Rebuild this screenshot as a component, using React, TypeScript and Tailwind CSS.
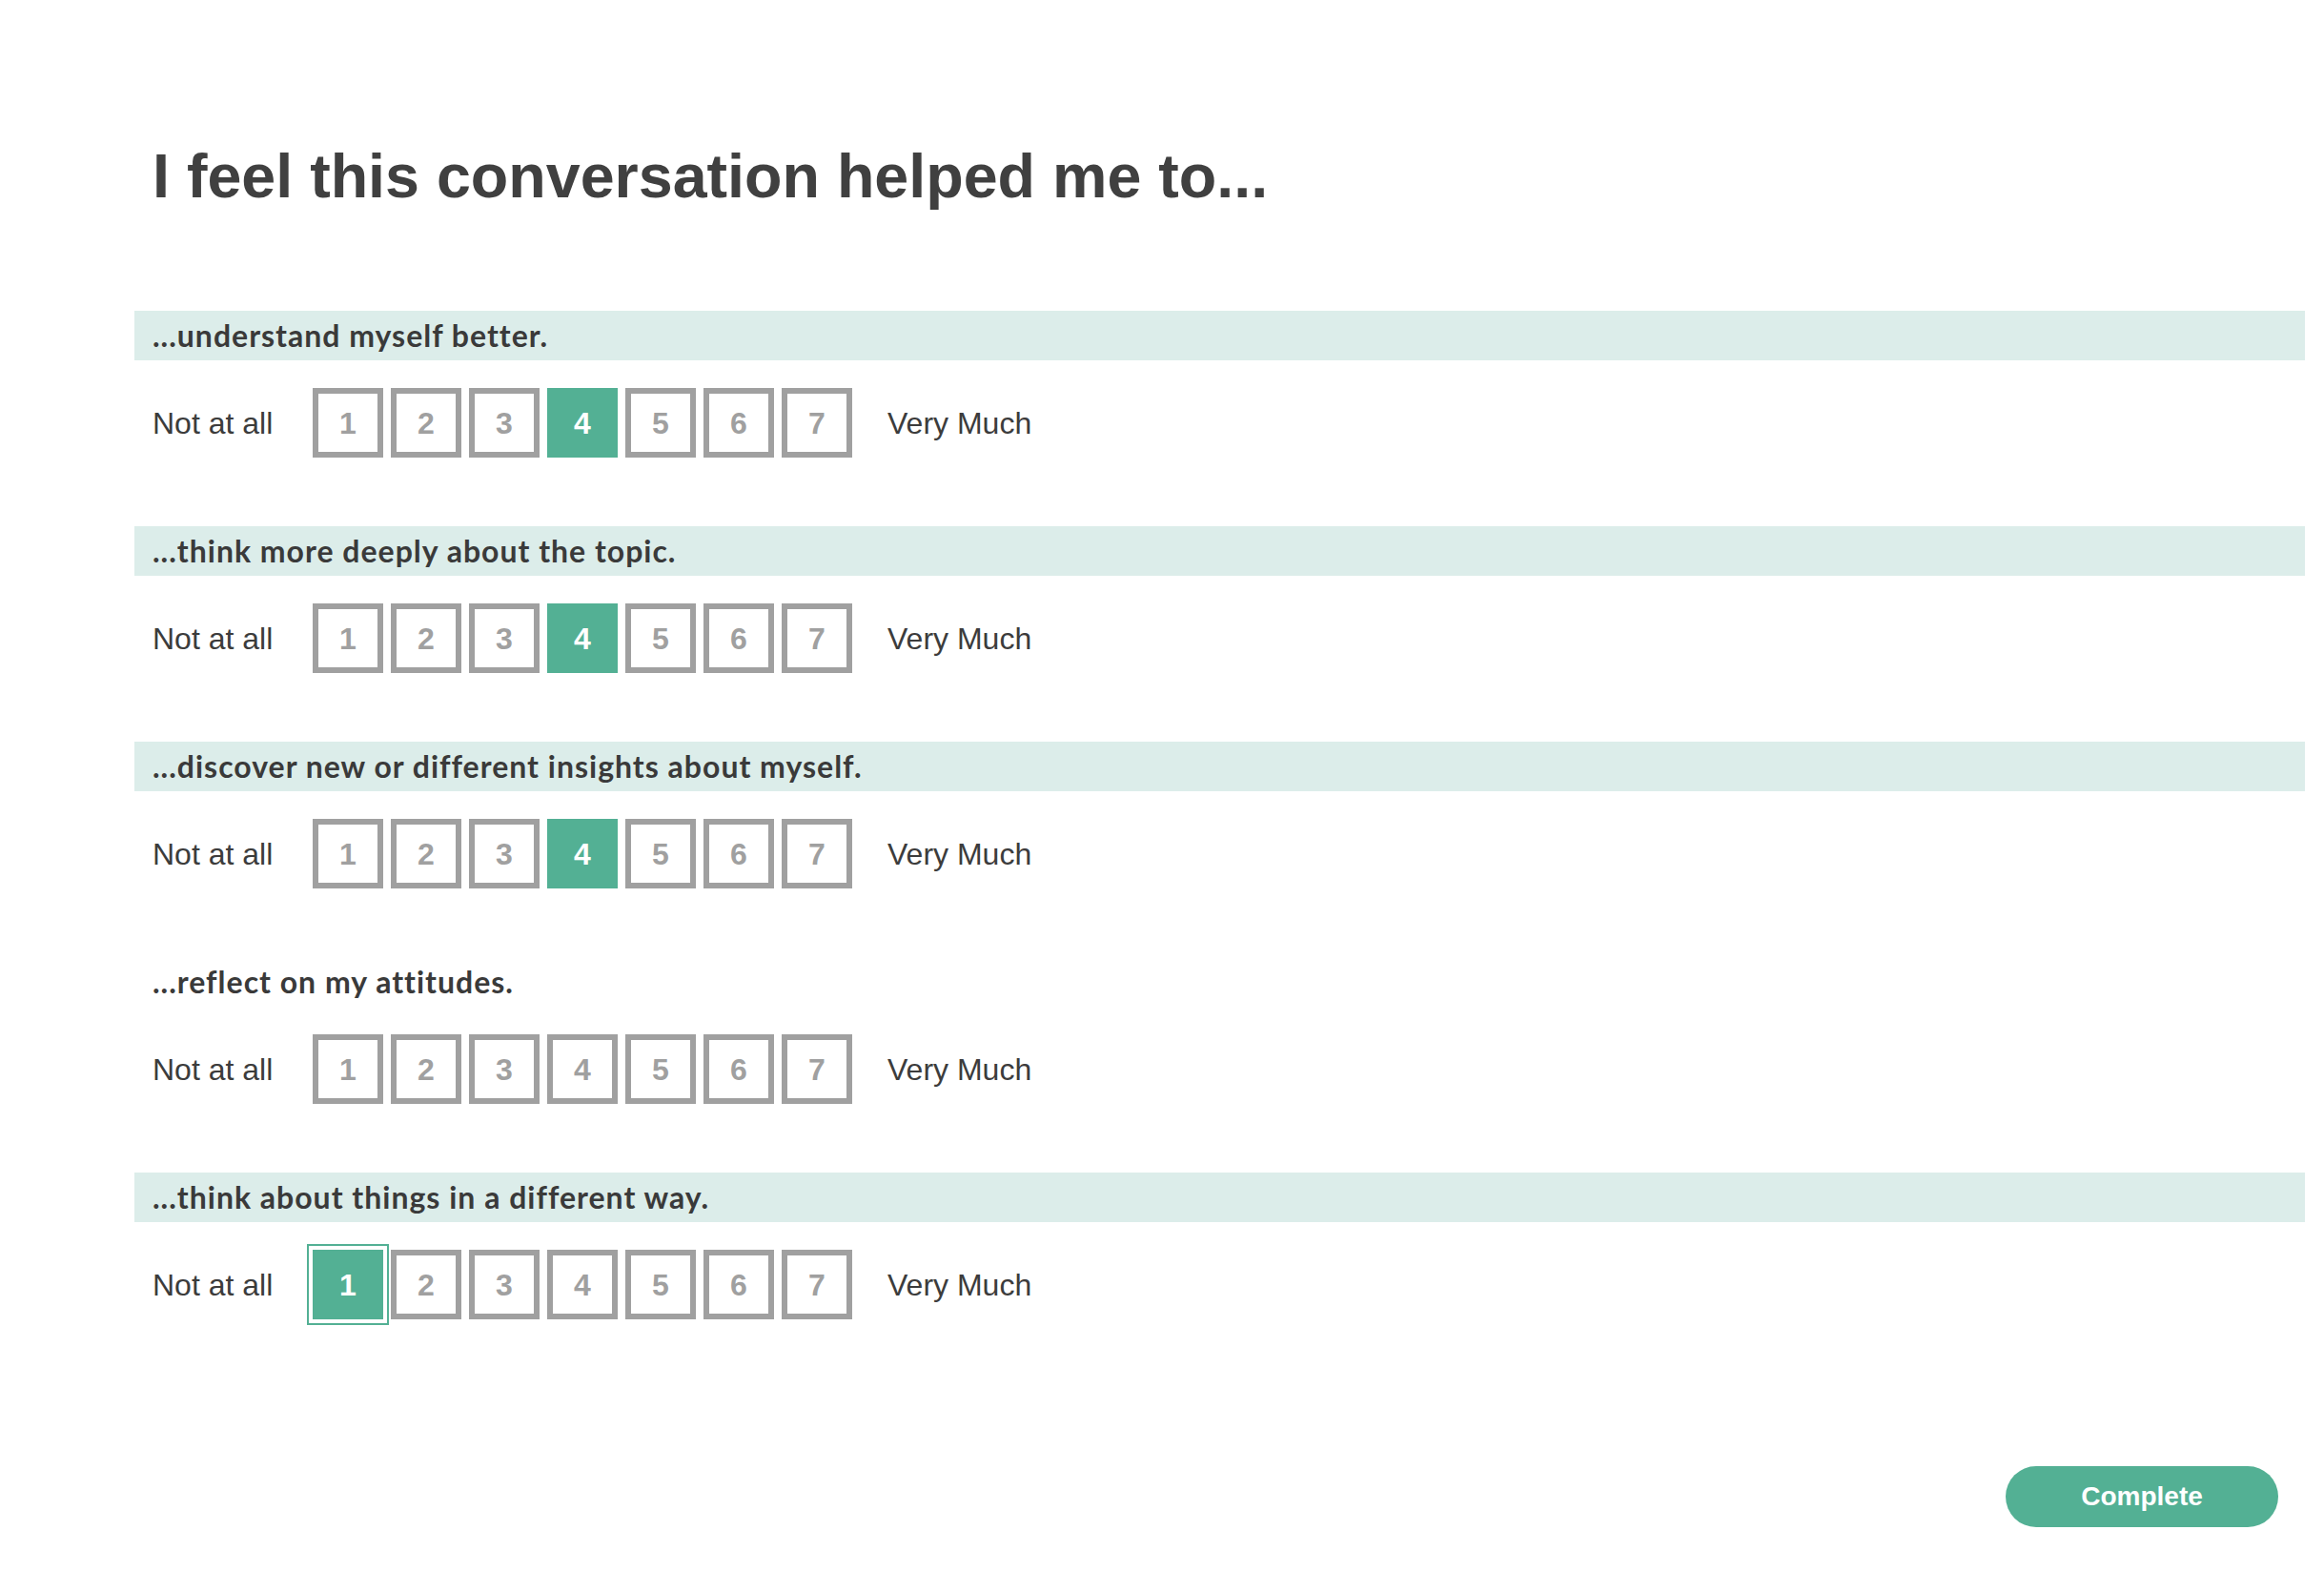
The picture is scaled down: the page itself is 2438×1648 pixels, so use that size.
import { useState } from 'react'

const questions = [
  { text: '...understand myself better.', tinted: true },
  { text: '...think more deeply about the topic.', tinted: true },
  { text: '...discover new or different insights about myself.', tinted: true },
  { text: '...reflect on my attitudes.', tinted: false },
  { text: '...think about things in a different way.', tinted: true },
]

const sans = { fontFamily: '"Liberation Sans", Arial, sans-serif' }
const headFont = { fontFamily: 'Lato, "Open Sans", sans-serif' }

function Scale(props: { value: number | null; focused?: boolean; onPick: (n: number) => void }) {
  return (
    <div className="flex h-[73px] items-center" style={sans}>
      <div className="w-[168px] text-[32px] text-[#3c3c3c]">Not at all</div>
      <div className="flex gap-[8px]">
        {[1, 2, 3, 4, 5, 6, 7].map((n) => {
          const on = props.value === n
          return (
            <button
              key={n}
              onClick={() => props.onPick(n)}
              className={
                on
                  ? 'flex h-[73px] w-[74px] items-center justify-center border-[6px] border-[#53b094] bg-[#53b094] text-[32px] font-bold text-white' +
                    (props.focused ? ' outline-2 outline-offset-4 outline-[#53b094]' : '')
                  : 'flex h-[73px] w-[74px] items-center justify-center border-[6px] border-[#a0a0a0] bg-white text-[32px] font-bold text-[#a0a0a0]'
              }
            >
              {n}
            </button>
          )
        })}
      </div>
      <div className="ml-[37px] text-[32px] text-[#3c3c3c]">Very Much</div>
    </div>
  )
}

export default function App() {
  const [answers, setAnswers] = useState<(number | null)[]>([4, 4, 4, null, 1])

  return (
    <div className="min-h-screen bg-white">
      <h1 className="pl-[160px] pt-[147px] text-[64.6px] font-bold leading-[77px] text-[#404040]" style={sans}>
        I feel this conversation helped me to...
      </h1>

      <div className="mt-[102px] ml-[141px] mr-[20px] flex flex-col gap-[72px]">
        {questions.map((q, i) => (
          <div key={i}>
            <div
              className={
                q.tinted
                  ? 'flex h-[52px] items-center bg-[#dcedea] pl-[19px] text-[32px] font-bold tracking-[1px] text-[#3a3a3a]'
                  : 'flex h-[52px] items-center pl-[19px] text-[32px] font-bold tracking-[1px] text-[#3a3a3a]'
              }
              style={headFont}
            >
              {q.text}
            </div>
            <div className="mt-[29px] pl-[19px]">
              <Scale
                value={answers[i]}
                focused={i === 4}
                onPick={(n) => setAnswers((a) => a.map((v, j) => (j === i ? n : v)))}
              />
            </div>
          </div>
        ))}
      </div>

      <div className="mt-[154px] flex justify-end pr-[48px]">
        <button
          className="h-[64px] w-[286px] rounded-full bg-[#53b094] text-[28px] font-bold text-white"
          style={sans}
        >
          Complete
        </button>
      </div>
    </div>
  )
}
